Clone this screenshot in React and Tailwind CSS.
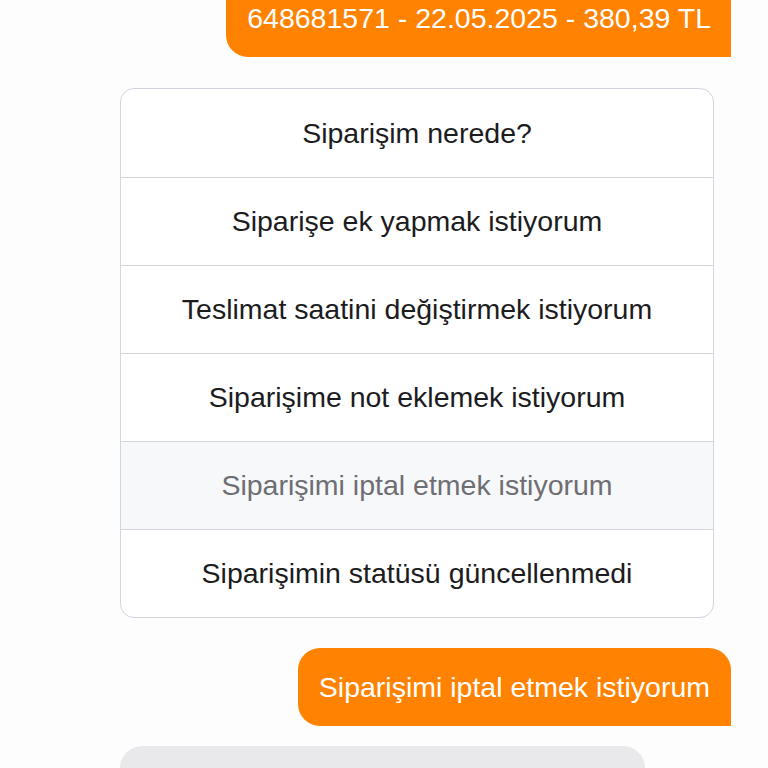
const options = [
  { label: "Siparişim nerede?" },
  { label: "Siparişe ek yapmak istiyorum" },
  { label: "Teslimat saatini değiştirmek istiyorum" },
  { label: "Siparişime not eklemek istiyorum" },
  { label: "Siparişimi iptal etmek istiyorum", selected: true },
  { label: "Siparişimin statüsü güncellenmedi" },
];

export default function App() {
  return (
    <div
      className="w-[768px] h-[768px] overflow-hidden bg-[#fdfdfd] flex flex-col"
      style={{ fontFamily: '"Liberation Sans", Arial, sans-serif' }}
    >
      {/* order summary bubble */}
      <div className="shrink-0 flex justify-end pr-[37px] -mt-[21px]">
        <div className="bg-[#ff8200] text-white text-[28.5px] leading-[34px] pl-[21px] pr-[20px] py-[22px] rounded-[22px] rounded-br-none">
          648681571 - 22.05.2025 - 380,39 TL
        </div>
      </div>

      {/* quick replies */}
      <div className="shrink-0 mt-[31px] ml-[120px] w-[594px] border-[1.5px] border-[#d3d6de] rounded-[14px] overflow-hidden bg-white">
        {options.map((item, i) => (
          <div
            key={i}
            className={
              "h-[88px] flex items-center justify-center text-[28.5px] " +
              (i > 0 ? "border-t-[1.5px] border-[#d3d6de] " : "") +
              (item.selected ? "bg-[#f7f8fa] text-[#6e6e73]" : "text-[#1c1c1e]")
            }
          >
            {item.label}
          </div>
        ))}
      </div>

      {/* selected reply */}
      <div className="shrink-0 flex justify-end pr-[37px] mt-[30px]">
        <div className="bg-[#ff8200] text-white text-[28.5px] leading-[34px] px-[21px] py-[22px] rounded-[22px] rounded-br-none">
          Siparişimi iptal etmek istiyorum
        </div>
      </div>

      {/* bot typing bubble */}
      <div className="mt-[20px] ml-[120px] w-[525px] h-[80px] shrink-0 bg-[#e9e9ec] rounded-[22px]" />
    </div>
  );
}
